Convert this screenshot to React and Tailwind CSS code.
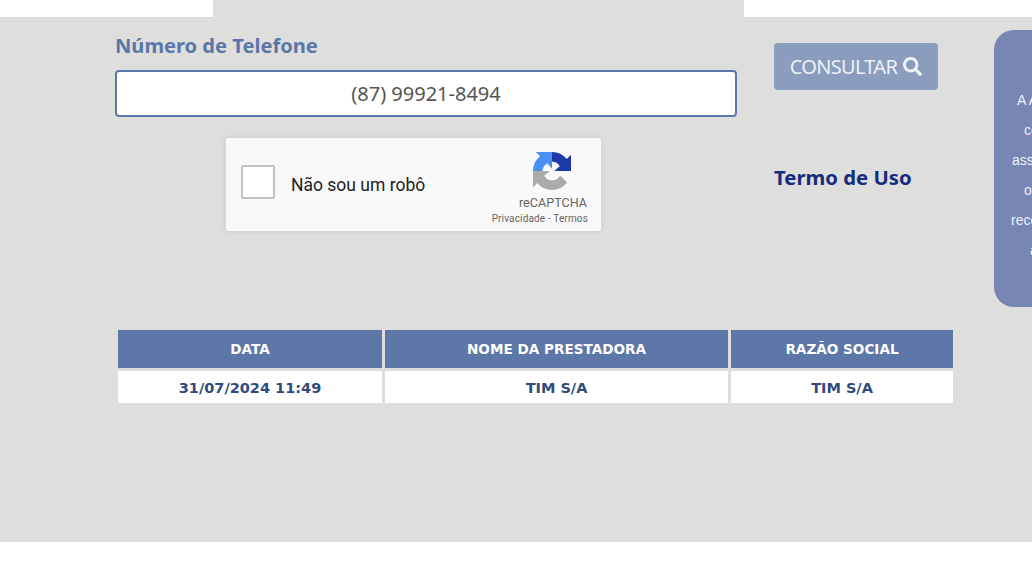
import { FaSearch } from "react-icons/fa";

const RecaptchaLogo = () => (
  <svg viewBox="0 0 64 64" className="mr-[17px] w-[38px] h-[38px]">
    <path
      fill="#ababab"
      d="M0 32V59.3L7.2 52.1A32 32 0 0 0 32 64A32 32 0 0 0 57.4 51.5L45.7 39.7A16 16 0 0 1 32 48A16 16 0 0 1 19 40L28 32Z"
    />
    <path
      fill="#4a90f2"
      d="M32 0H4.7L11.9 7.2A32 32 0 0 0 0 32H16A16 16 0 0 1 24 19L32 28Z"
    />
    <path
      fill="#1c3aa9"
      d="M64 32V4.7L56.8 11.9A32 32 0 0 0 32 0V16A16 16 0 0 1 45 24L36 32Z"
    />
  </svg>
);

const Recaptcha = () => (
  <div className="flex w-[377px] h-[95px] ml-[110px] mt-[20px] items-center justify-between rounded-[3px] border border-[#d6d6d6] bg-[#f9f9f9] pl-[15px] pr-[13px] shadow-[0_0_4px_rgba(0,0,0,0.08)] font-['Roboto',sans-serif]">
    <div className="flex items-center">
      <div className="w-[34px] h-[34px] mb-[5px] rounded-[2px] border-2 border-[#c1c1c1] bg-white" />
      <span className="ml-[16px] mt-[1px] text-[17.5px] text-[#222]">Não sou um robô</span>
    </div>
    <div className="flex flex-col items-end self-start pt-[14px]">
      <RecaptchaLogo />
      <span className="mt-[5px] mr-[1px] text-[12.6px] leading-[16px] text-[#666]">reCAPTCHA</span>
      <span className="mt-[1px] text-[10px] leading-[14px] tracking-[0.15px] text-[#666]">Privacidade - Termos</span>
    </div>
  </div>
);

const columns = [
  { title: "DATA", value: "31/07/2024 11:49", width: "w-[264px]" },
  { title: "NOME DA PRESTADORA", value: "TIM S/A", width: "w-[343px]" },
  { title: "RAZÃO SOCIAL", value: "TIM S/A", width: "w-[222px]" },
];

const Results = () => (
  <table className="ml-[115px] mt-[20px] table-fixed border-separate border-spacing-[3px] font-['DejaVu_Sans',sans-serif] font-bold">
    <thead>
      <tr>
        {columns.map((c) => (
          <th key={c.title} className={`${c.width} h-[38px] bg-[#5c77a8] p-0 text-center text-[13.6px] text-white`}>
            {c.title}
          </th>
        ))}
      </tr>
    </thead>
    <tbody>
      <tr>
        {columns.map((c) => (
          <td key={c.title} className="h-[32px] bg-white p-0 pt-[3px] text-center text-[14.5px] text-[#2f4b7c]">
            {c.value}
          </td>
        ))}
      </tr>
    </tbody>
  </table>
);

export default function App() {
  return (
    <div className="h-[563px] w-[1032px] overflow-hidden bg-white font-['Noto_Sans',sans-serif]">
      <div className="flex h-[17px]">
        <div className="w-[213px] bg-white" />
        <div className="w-[531px] bg-[#dededc]" />
        <div className="flex-1 bg-white" />
      </div>
      <main className="h-[525px] bg-[#dededc]">
        <div className="flex h-[290px] pl-[115px]">
          <div className="w-[622px] shrink-0">
            <h2 className="mt-[15px] text-[20.1px] leading-[28px] font-bold text-[#5b77a8]">Número de Telefone</h2>
            <input
              readOnly
              value="(87) 99921-8494"
              className="mt-[10px] h-[47px] w-full rounded-[4px] border-2 border-[#5b77a8] bg-white text-center text-[20px] text-[#555] outline-none"
            />
            <Recaptcha />
          </div>
          <div className="ml-[37px] w-[164px] shrink-0">
            <button className="mt-[26px] flex h-[47px] w-full items-center justify-center gap-[6px] rounded-[4px] bg-[#8a9dbc] text-[20px] tracking-[-0.7px] text-[#eef1f6]">
              CONSULTAR <FaSearch className="h-[19px] w-[19px]" />
            </button>
            <h3 className="mt-[73px] text-[20.3px] leading-[28px] font-bold text-[#152c7e]">Termo de Uso</h3>
          </div>
          <aside className="ml-[56px] mt-[13px] h-[277px] w-[260px] shrink-0 rounded-[20px] bg-[#7886b4] pt-[55px] font-['Liberation_Sans',sans-serif] text-[14px] leading-[30px] text-[#eef1f6]">
            <p className="ml-[23px] whitespace-nowrap">A Anatel</p>
            <p className="ml-[30px] whitespace-nowrap">consulta</p>
            <p className="ml-[18px] whitespace-nowrap">assinante</p>
            <p className="ml-[30px] whitespace-nowrap">operadora</p>
            <p className="ml-[17px] whitespace-nowrap">recebidas</p>
            <p className="ml-[36px] whitespace-nowrap">a</p>
          </aside>
        </div>
        <Results />
      </main>
    </div>
  );
}
